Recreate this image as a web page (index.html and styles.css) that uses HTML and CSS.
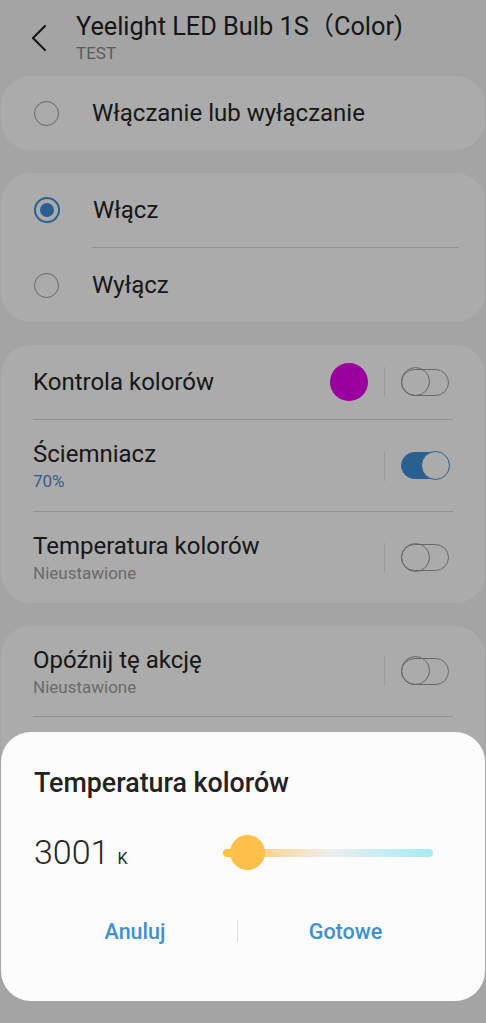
FILE: index.html
```html
<!DOCTYPE html>
<html lang="pl">
<head>
  <meta charset="UTF-8" />
  <meta name="viewport" content="width=device-width, initial-scale=1.0"/>
  <title>Yeelight LED Bulb 1S</title>
  <link rel="stylesheet" href="styles.css">
</head>
<body>

  <div class="header">
    <svg class="back" width="24" height="30" viewBox="0 0 24 30">
      <path d="M16 3 L4 15 L16 27" fill="none" stroke="#222" stroke-width="2.2" stroke-linecap="round" stroke-linejoin="round"/>
    </svg>
    <div class="titles">
      <div class="title">Yeelight LED Bulb 1S（Color)</div>
      <div class="subtitle">TEST</div>
    </div>
  </div>

  <div class="cards">
    <div class="card">
      <div class="radio-row">
        <span class="radio"></span>
        <span class="label">Włączanie lub wyłączanie</span>
      </div>
    </div>

    <div class="card">
      <div class="radio-row">
        <span class="radio checked"></span>
        <span class="label">Włącz</span>
      </div>
      <div class="radio-divider"></div>
      <div class="radio-row">
        <span class="radio"></span>
        <span class="label">Wyłącz</span>
      </div>
    </div>

    <div class="card">
      <div class="row short">
        <div class="texts"><div class="label">Kontrola kolorów</div></div>
        <span class="swatch"></span>
        <span class="vbar"></span>
        <span class="toggle"></span>
      </div>
      <div class="row">
        <div class="texts">
          <div class="label">Ściemniacz</div>
          <div class="sub blue">70%</div>
        </div>
        <span class="vbar"></span>
        <span class="toggle on"></span>
      </div>
      <div class="row">
        <div class="texts">
          <div class="label">Temperatura kolorów</div>
          <div class="sub">Nieustawione</div>
        </div>
        <span class="vbar"></span>
        <span class="toggle"></span>
      </div>
    </div>

    <div class="card">
      <div class="row tight">
        <div class="texts">
          <div class="label">Opóźnij tę akcję</div>
          <div class="sub">Nieustawione</div>
        </div>
        <span class="vbar"></span>
        <span class="toggle"></span>
      </div>
      <div class="row"></div>
    </div>
  </div>

  <div class="dim"></div>

  <div class="dialog">
    <div class="dialog-title">Temperatura kolorów</div>
    <div class="temp">
      <div class="value">3001<span class="unit">K</span></div>
      <div class="slider">
        <div class="track"></div>
        <div class="thumb"></div>
      </div>
    </div>
    <div class="actions">
      <button class="action">Anuluj</button>
      <span class="action-bar"></span>
      <button class="action">Gotowe</button>
    </div>
  </div>

</body>
</html>
```

FILE: styles.css
```css
html, body {
  margin: 0;
  padding: 0;
  height: 1023px;
  overflow: hidden;
  font-family: Roboto, "Noto Sans", "Noto Sans CJK SC", sans-serif;
  background-color: #f5f5f5;
  color: #252525;
}
.header {
  display: flex;
  align-items: flex-start;
  height: 76px;
  box-sizing: border-box;
  padding: 12px 0 0 29px;
}
.back {
  margin-top: 11px;
  margin-right: 23px;
}
.title {
  font-size: 25.3px;
  line-height: 30px;
  color: #222;
}
.subtitle {
  font-size: 17px;
  line-height: 20px;
  color: #8a8a8a;
  margin-top: 1px;
}
.cards {
  display: flex;
  flex-direction: column;
  gap: 23px;
  padding: 0 1px;
}
.card {
  background: #fff;
  border-radius: 30px;
}
.radio-row {
  display: flex;
  align-items: center;
  height: 74px;
  padding-left: 33px;
}
.radio-row .label {
  margin-left: 33px;
}
.radio-divider {
  height: 1px;
  background: #d6d6d6;
  margin: 0 26px 0 91px;
}
.radio {
  width: 23px;
  height: 23px;
  border: 1.5px solid #9c9c9c;
  border-radius: 50%;
  position: relative;
  flex: none;
}
.radio.checked {
  border: 2px solid #3e8fd6;
  width: 22px;
  height: 22px;
}
.radio.checked::after {
  content: "";
  position: absolute;
  left: 4px;
  top: 4px;
  width: 14px;
  height: 14px;
  border-radius: 50%;
  background: #3e8fd6;
}
.label {
  font-size: 24px;
  line-height: 28px;
}
.row {
  display: flex;
  align-items: center;
  height: 92px;
  margin: 0 32px;
  border-top: 1px solid #d6d6d6;
  box-sizing: border-box;
}
.row:first-child {
  border-top: none;
}
.row.short {
  height: 74px;
}
.row.tight {
  height: 90px;
}
.texts {
  flex: 1;
}
.sub {
  font-size: 17px;
  line-height: 20px;
  color: #a0a0a0;
  margin-top: 3px;
}
.sub.blue {
  color: #4a8fd0;
}
.swatch {
  width: 38px;
  height: 38px;
  border-radius: 50%;
  background: #e800ee;
  margin-right: 16px;
}
.vbar {
  width: 1px;
  height: 30px;
  background: #e6e6e6;
  margin-right: 16px;
}
.toggle {
  width: 46px;
  height: 25px;
  border: 1.5px solid #9a9a9a;
  border-radius: 14px;
  position: relative;
  margin-right: 4px;
}
.toggle::after {
  content: "";
  position: absolute;
  left: -1.5px;
  top: -2.5px;
  width: 27px;
  height: 27px;
  border: 1.5px solid #9a9a9a;
  border-radius: 50%;
}
.toggle.on {
  background: #3e8fd6;
  border-color: #3e8fd6;
}
.toggle.on::after {
  left: auto;
  right: -1.5px;
  background: #fff;
  border-color: #3e8fd6;
}
.dim {
  position: fixed;
  inset: 0;
  background: rgba(0, 0, 0, 0.33);
}
.dialog {
  position: fixed;
  left: 1px;
  right: 1px;
  top: 732px;
  height: 269px;
  background: #fcfcfc;
  border-radius: 30px;
  box-sizing: border-box;
  padding: 35px 33px 0 33px;
}
.dialog-title {
  font-size: 26.8px;
  font-weight: 500;
  line-height: 32px;
  color: #222;
}
.temp {
  display: flex;
  align-items: center;
  margin-top: 36px;
  height: 40px;
}
.value {
  font-size: 34px;
  font-weight: 300;
  line-height: 40px;
  color: #252525;
  width: 189px;
}
.unit {
  font-size: 16px;
  font-weight: 400;
  margin-left: 8px;
}
.slider {
  position: relative;
  width: 210px;
  height: 36px;
  margin-top: -4px;
}
.track {
  position: absolute;
  left: 0;
  right: 0;
  top: 14px;
  height: 8px;
  border-radius: 4px;
  background: linear-gradient(to right, #fcbf40 0%, #f6d8a0 25%, #eeeeee 50%, #c6eef2 75%, #a6ecf4 100%);
}
.thumb {
  position: absolute;
  left: 7px;
  top: 0;
  width: 35px;
  height: 35px;
  border-radius: 50%;
  background: #fdc04a;
}
.actions {
  display: flex;
  align-items: center;
  margin: 41px -33px 0 -33px;
}
.action {
  flex: 1;
  border: none;
  background: none;
  font-family: inherit;
  font-size: 21.5px;
  font-weight: 500;
  color: #3e8fd6;
  padding: 0;
  height: 30px;
}
.action:first-child {
  flex: none;
  width: 236px;
  padding-left: 32px;
}
.action:last-child {
  padding-right: 32px;
}
.action-bar {
  width: 1px;
  height: 22px;
  background: #e0e0e0;
}
```
